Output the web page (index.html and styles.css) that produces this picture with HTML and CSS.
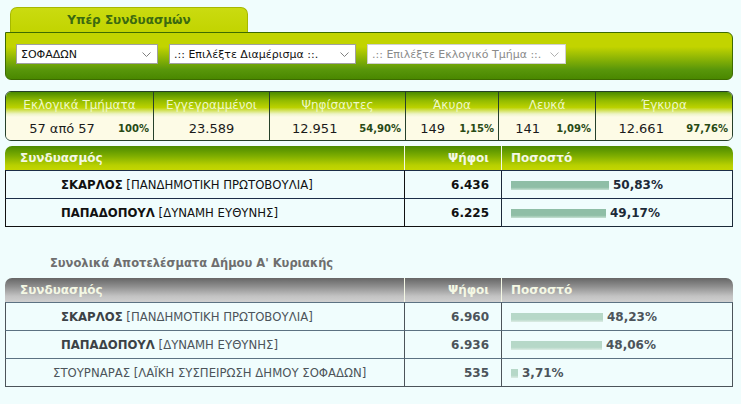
FILE: index.html
```html
<!DOCTYPE html>
<html lang="el">
<head>
    <meta charset="UTF-8">
    <meta name="viewport" content="width=device-width, initial-scale=1.0">
    <title>Αποτελέσματα Εκλογών</title>
    <link rel="stylesheet" href="styles.css">
</head>
<body>
<div class="wrap">

    <!-- επιλογή περιοχής -->
    <div class="tab">Υπέρ Συνδυασμών</div>
    <div class="panel">
        <span class="sel-box sel-dimos">
            <select class="sel">
                <option>ΣΟΦΑΔΩΝ</option>
            </select>
            <svg class="arrow" width="9" height="5" viewBox="0 0 9 5"><path d="M0.5 0.5 L4.5 4.5 L8.5 0.5" fill="none" stroke="#808080"/></svg>
        </span>
        <span class="sel-box sel-diam">
            <select class="sel">
                <option>.:: Επιλέξτε Διαμέρισμα ::.</option>
            </select>
            <svg class="arrow" width="9" height="5" viewBox="0 0 9 5"><path d="M0.5 0.5 L4.5 4.5 L8.5 0.5" fill="none" stroke="#808080"/></svg>
        </span>
        <span class="sel-box sel-tmima">
            <select class="sel" disabled>
                <option>.:: Επιλέξτε Εκλογικό Τμήμα ::.</option>
            </select>
            <svg class="arrow" width="9" height="5" viewBox="0 0 9 5"><path d="M0.5 0.5 L4.5 4.5 L8.5 0.5" fill="none" stroke="#b0b0b0"/></svg>
        </span>
    </div>

    <!-- σύνοψη -->
    <table class="stats">
        <tr>
            <th class="c1">Εκλογικά Τμήματα</th>
            <th class="c2">Εγγεγραμμένοι</th>
            <th class="c3">Ψηφίσαντες</th>
            <th class="c4">Άκυρα</th>
            <th class="c5">Λευκά</th>
            <th class="c6">Έγκυρα</th>
        </tr>
        <tr>
            <td><div class="cell"><span class="num">57 από 57</span><span class="pct">100%</span></div></td>
            <td><div class="cell"><span class="num">23.589</span></div></td>
            <td><div class="cell"><span class="num">12.951</span><span class="pct">54,90%</span></div></td>
            <td><div class="cell"><span class="num">149</span><span class="pct">1,15%</span></div></td>
            <td><div class="cell"><span class="num">141</span><span class="pct">1,09%</span></div></td>
            <td><div class="cell"><span class="num">12.661</span><span class="pct">97,76%</span></div></td>
        </tr>
    </table>

    <!-- αποτελέσματα τμήματος -->
    <table class="results green">
        <tr>
            <th class="col-name">Συνδυασμός</th>
            <th class="col-votes">Ψήφοι</th>
            <th class="col-pct">Ποσοστό</th>
        </tr>
        <tr>
            <td class="col-name"><b>ΣΚΑΡΛΟΣ</b> [ΠΑΝΔΗΜΟΤΙΚΗ ΠΡΩΤΟΒΟΥΛΙΑ]</td>
            <td class="col-votes">6.436</td>
            <td class="col-pct"><span class="bar" style="width: 98px"></span>50,83%</td>
        </tr>
        <tr>
            <td class="col-name"><b>ΠΑΠΑΔΟΠΟΥΛ</b> [ΔΥΝΑΜΗ ΕΥΘΥΝΗΣ]</td>
            <td class="col-votes">6.225</td>
            <td class="col-pct"><span class="bar" style="width: 95px"></span>49,17%</td>
        </tr>
    </table>

    <h3 class="title">Συνολικά Αποτελέσματα Δήμου Α' Κυριακής</h3>

    <table class="results grey">
        <tr>
            <th class="col-name">Συνδυασμός</th>
            <th class="col-votes">Ψήφοι</th>
            <th class="col-pct">Ποσοστό</th>
        </tr>
        <tr>
            <td class="col-name"><b>ΣΚΑΡΛΟΣ</b> [ΠΑΝΔΗΜΟΤΙΚΗ ΠΡΩΤΟΒΟΥΛΙΑ]</td>
            <td class="col-votes">6.960</td>
            <td class="col-pct"><span class="bar" style="width: 92px"></span>48,23%</td>
        </tr>
        <tr>
            <td class="col-name"><b>ΠΑΠΑΔΟΠΟΥΛ</b> [ΔΥΝΑΜΗ ΕΥΘΥΝΗΣ]</td>
            <td class="col-votes">6.936</td>
            <td class="col-pct"><span class="bar" style="width: 91px"></span>48,06%</td>
        </tr>
        <tr>
            <td class="col-name plain">ΣΤΟΥΡΝΑΡΑΣ [ΛΑΪΚΗ ΣΥΣΠΕΙΡΩΣΗ ΔΗΜΟΥ ΣΟΦΑΔΩΝ]</td>
            <td class="col-votes">535</td>
            <td class="col-pct"><span class="bar" style="width: 7px"></span>3,71%</td>
        </tr>
    </table>

</div>
</body>
</html>
```

FILE: styles.css
```css
body {
    margin: 0;
    padding-top: 7px;
    background-color: #f0fdfd;
    font-family: "DejaVu Sans", Verdana, sans-serif;
    font-size: 11px;
    color: #1a1a1a;
}

.wrap {
    width: 728px;
    margin-left: 5px;
}

/* καρτέλα */
.tab {
    width: 236px;
    height: 24px;
    margin-left: 5px;
    border: 1px solid #a6b800;
    border-bottom: none;
    border-radius: 7px 7px 0 0;
    background: linear-gradient(#cadb10, #c2d400);
    color: #3b6a10;
    font-weight: bold;
    font-size: 12px;
    line-height: 24px;
    text-align: center;
}

.panel {
    display: flex;
    gap: 11px;
    padding: 11px 0 0 10px;
    box-sizing: border-box;
    height: 48px;
    border: 1px solid #3d6b00;
    border-radius: 0 6px 6px 6px;
    background: linear-gradient(#c2d400 0%, #c2d400 30%, #58960a 80%, #4a8800 100%);
}

.sel-box {
    position: relative;
    display: inline-block;
    height: 20px;
}

.sel {
    width: 100%;
    height: 20px;
    padding: 0 14px 0 4px;
    border: 1px solid #a0a0a0;
    border-radius: 0;
    background-color: #fff;
    appearance: none;
    -webkit-appearance: none;
    font-family: "DejaVu Sans", Verdana, sans-serif;
    font-size: 11px;
    color: #111;
}

.sel:disabled {
    color: #8a8a8a;
    border-color: #d0d0d0;
    opacity: 1;
}

.arrow {
    position: absolute;
    right: 7px;
    top: 8px;
    pointer-events: none;
}

.sel-dimos { width: 142px; }
.sel-diam { width: 187px; }
.sel-tmima { width: 199px; }

/* σύνοψη */
.stats {
    width: 728px;
    margin-top: 11px;
    border-spacing: 0;
    border: 1px solid #26402a;
    border-radius: 6px;
    table-layout: fixed;
}

.stats th {
    height: 25px;
    padding: 0;
    background: linear-gradient(#4a8a00 0%, #94bc00 35%, #bcd200 62%, #eef4c8 88%, #fdfbe6 100%);
    color: #eef8c8;
    font-weight: normal;
    font-size: 12px;
    border-left: 1px solid #26402a;
}

.stats td {
    height: 23px;
    padding: 0;
    background-color: #fdfbe6;
    border-left: 1px solid #26402a;
}

.stats th:first-child,
.stats td:first-child {
    border-left: none;
}

.stats th:first-child { border-top-left-radius: 5px; }
.stats th:last-child { border-top-right-radius: 5px; }
.stats td:first-child { border-bottom-left-radius: 5px; }
.stats td:last-child { border-bottom-right-radius: 5px; }

.c1 { width: 147px; }
.c2 { width: 115px; }
.c3 { width: 135px; }
.c4 { width: 92px; }
.c5 { width: 96px; }

.cell {
    display: flex;
    align-items: center;
}

.cell .num {
    flex: 1;
    text-align: center;
    font-size: 13px;
}

.cell .pct {
    padding: 0 4px 0 0;
    font-weight: bold;
    font-size: 10px;
    color: #284a14;
}

/* αποτελέσματα */
.results {
    width: 728px;
    margin-top: 5px;
    border-spacing: 0;
    table-layout: fixed;
}

.results th {
    height: 24px;
    padding: 0 12px;
    font-size: 12px;
    font-weight: bold;
    color: #f4f8e4;
    text-align: left;
}

.results td {
    height: 27px;
    padding: 0 12px;
    font-size: 11.7px;
}

.results th.col-votes,
.results td.col-votes {
    text-align: right;
    font-weight: bold;
}

.results td.col-votes { font-size: 12px; }

.results td.col-name { padding-left: 55px; }
.results td.plain { padding-left: 47px; }
.results th.col-name { padding-left: 15px; }

.results .col-name { width: 399px; box-sizing: border-box; }
.results .col-votes { width: 97px; box-sizing: border-box; }

.results td.col-pct {
    padding-left: 9px;
    font-weight: bold;
    font-size: 12px;
}

.results th.col-pct { padding-left: 9px; }

.bar {
    display: inline-block;
    height: 9px;
    margin-right: 4px;
    vertical-align: -1px;
}

.results th + th,
.results td + td {
    border-left: 1px solid;
}

.results td {
    border-top: 1px solid;
}

.results tr td:first-child { border-left: 1px solid; }
.results tr td:last-child { border-right: 1px solid; }
.results tr:last-child td { border-bottom: 1px solid; }

.results th:first-child { border-top-left-radius: 7px; }
.results th:last-child { border-top-right-radius: 7px; }

/* πράσινος πίνακας */
.green th {
    background: linear-gradient(#4a8a00 0%, #7cac00 40%, #b8d000 80%, #c4d600 100%);
    border-color: #1c2e48;
}

.green td {
    border-color: #1c2e48;
    color: #111;
}

.green .bar {
    background: linear-gradient(#8fbea6 0%, #8fbea6 70%, #c6e0d2 100%);
}

.green td.col-pct { color: #1c2a38; }

/* γκρι πίνακας */
.title {
    margin: 29px 0 0 45px;
    font-size: 11.5px;
    color: #6e6e6e;
}

.grey {
    margin-top: 8px;
}

.grey th {
    background: linear-gradient(#666 0%, #8e8e8e 35%, #c2c2c2 75%, #d0d0d0 100%);
    border-color: #1c2e48;
}

.grey td {
    border-color: #5c7282;
    color: #4c545a;
}

.grey td b { color: #3c4246; }

.grey .bar {
    background: linear-gradient(#b6d8c8 0%, #b6d8c8 70%, #dcece4 100%);
}

.grey td.col-pct { color: #4c545a; }
```
